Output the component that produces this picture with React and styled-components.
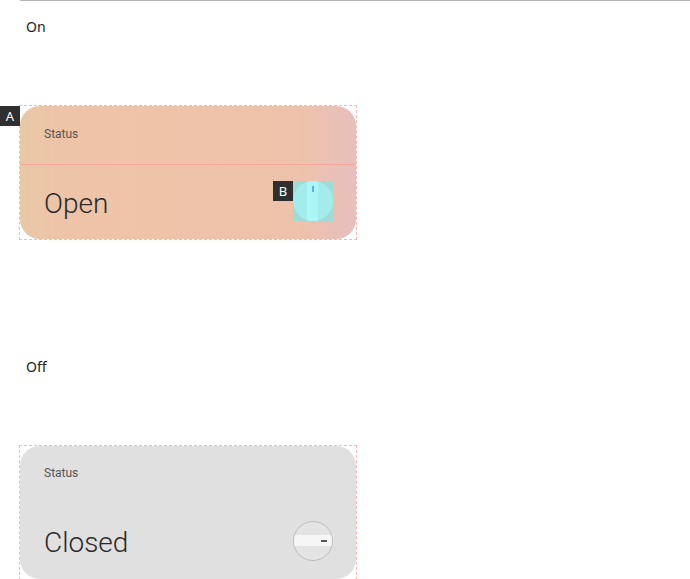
import React from "react";
import styled, { createGlobalStyle } from "styled-components";

const Global = createGlobalStyle`
  html, body { margin: 0; padding: 0; background: #ffffff; }
  body { font-family: Roboto, "Noto Sans", Arial, sans-serif; }
`;

const Page = styled.div`
  padding-left: 20px;
  height: 579px;
  overflow: hidden;
`;

const Column = styled.div`
  border-top: 1px solid #b4b4b4;
`;

const Section = styled.section`
  height: 340px;
  position: relative;
  padding-left: 6px;
  box-sizing: border-box;
`;

const Heading = styled.h3`
  margin: 0;
  padding-top: ${(p) => p.$top}px;
  font-family: "Noto Sans", "Open Sans", Arial, sans-serif;
  font-weight: 400;
  font-size: 14px;
  line-height: 20px;
  color: #222;
`;

const CardFrame = styled.div`
  position: relative;
  margin-top: ${(p) => p.$gap}px;
  margin-left: -6px;
  width: 336px;
  outline: 1px dashed #f6b8b8;
`;

const Card = styled.div`
  height: 133px;
  border-radius: 20px;
  overflow: hidden;
  display: flex;
  flex-direction: column;
  background: ${(p) =>
    p.$on
      ? "linear-gradient(90deg, #e8c8a6 0%, #eec4a8 12%, #efc3a9 50%, #eec2aa 82%, #e7bfbc 100%)"
      : "#e0e0e0"};
`;

const Header = styled.div`
  height: 59px;
  flex: none;
  padding-left: 24px;
  box-sizing: border-box;
  border-bottom: 1px solid ${(p) => (p.$on ? "#f3a89d" : "transparent")};
  font-size: 12px;
  line-height: 16px;
  color: #555;
  padding-top: ${(p) => (p.$on ? 20 : 19)}px;
`;

const Body = styled.div`
  flex: 1;
  display: flex;
  align-items: flex-start;
  justify-content: space-between;
  padding: 0 23px 0 24px;
`;

const Value = styled.div`
  font-size: 28px;
  font-weight: 300;
  line-height: 32px;
  color: #2a2a2a;
  margin-top: ${(p) => p.$top}px;
`;

const KnobWrap = styled.div`
  position: relative;
  margin-top: ${(p) => p.$top}px;
  width: 40px;
  height: 40px;
  background: ${(p) => (p.$on ? "#a0dbd4" : "transparent")};
`;

const Knob = styled.div`
  width: 40px;
  height: 40px;
  border-radius: 50%;
  box-sizing: border-box;
  overflow: hidden;
  position: relative;
  background: ${(p) => (p.$on ? "#a3ecec" : "#e4e4e4")};
  border: ${(p) => (p.$on ? "none" : "1px solid #bdbdbd")};
  transform: rotate(${(p) => (p.$on ? 0 : 90)}deg);
`;

const Band = styled.div`
  position: absolute;
  left: 50%;
  top: 0;
  bottom: 0;
  width: 11px;
  margin-left: -6px;
  background: ${(p) => (p.$on ? "#abf7f7" : "#f6f6f6")};
`;

const Tick = styled.div`
  position: absolute;
  left: 50%;
  top: 5px;
  width: 2px;
  height: 6px;
  margin-left: -1px;
  background: ${(p) => (p.$on ? "#58b0e8" : "#555")};
`;

const Badge = styled.div`
  position: absolute;
  width: 20px;
  height: 20px;
  background: #2f2f2f;
  color: #fff;
  font-family: "Noto Sans", Arial, sans-serif;
  font-size: 13px;
  line-height: 20px;
  text-align: center;
  left: ${(p) => p.$left}px;
  top: ${(p) => p.$top}px;
`;

function StatusCard({ on }) {
  return (
    <Card $on={on}>
      <Header $on={on}>Status</Header>
      <Body>
        <Value $top={on ? 23 : 22}>{on ? "Open" : "Closed"}</Value>
        <KnobWrap $on={on} $top={16}>
          {on && <Badge $left={-20} $top={0}>B</Badge>}
          <Knob $on={on}>
            <Band $on={on} />
            <Tick $on={on} />
          </Knob>
        </KnobWrap>
      </Body>
    </Card>
  );
}

export default function App() {
  return (
    <>
      <Global />
      <Page>
        <Column>
          <Section>
            <Heading $top={16}>On</Heading>
            <CardFrame $gap={69}>
              <Badge $left={-20} $top={0}>A</Badge>
              <StatusCard on />
            </CardFrame>
          </Section>
          <Section>
            <Heading $top={16}>Off</Heading>
            <CardFrame $gap={69}>
              <StatusCard on={false} />
            </CardFrame>
          </Section>
        </Column>
      </Page>
    </>
  );
}
